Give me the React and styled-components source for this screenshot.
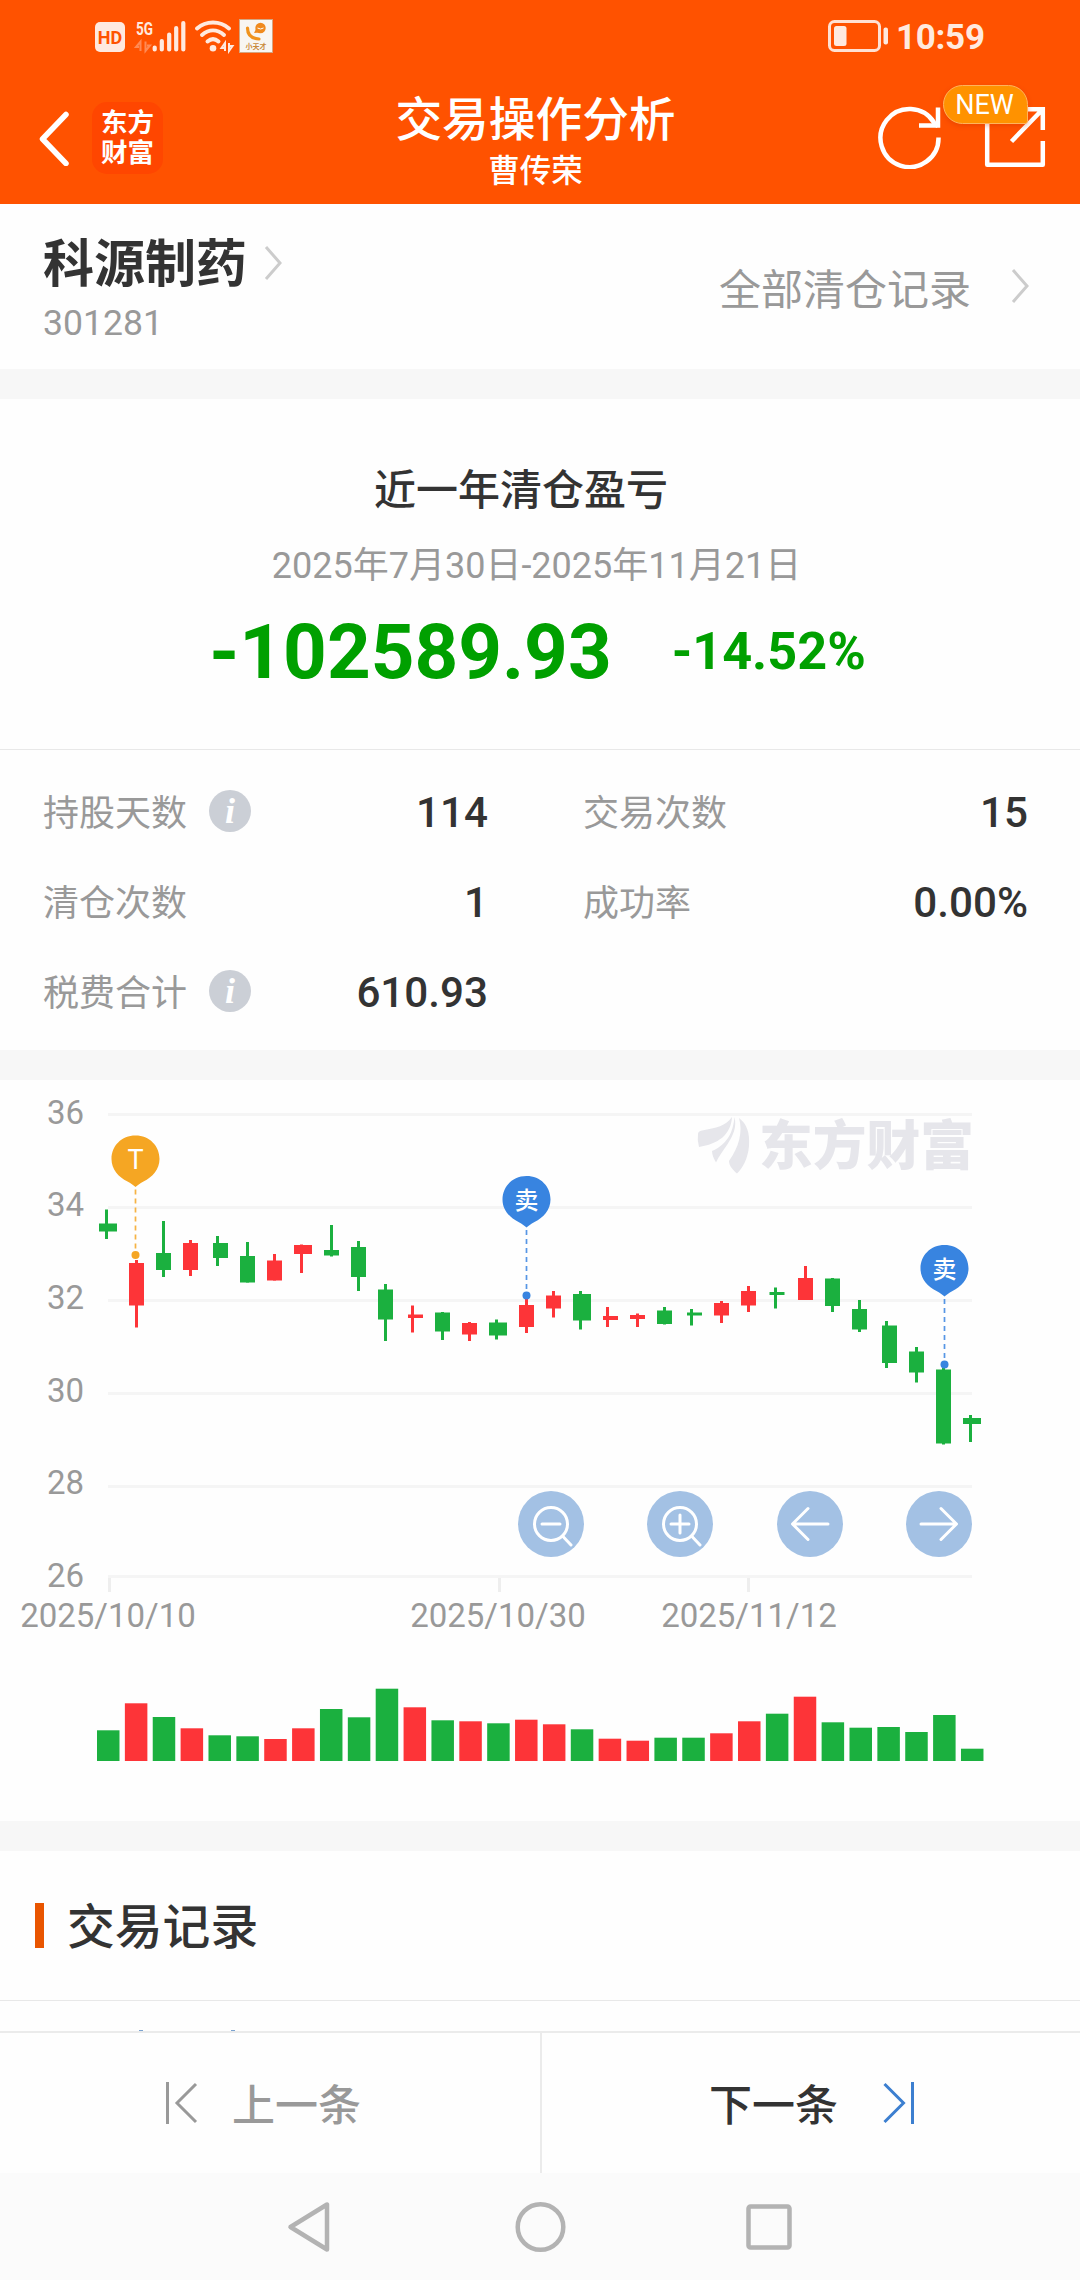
import styled, { createGlobalStyle } from "styled-components";

const GlobalStyle = createGlobalStyle`
  * {
    box-sizing: border-box;
  }

  body {
    margin: 0;
    background: #fefefe;
    color: #333;
    font-family: Roboto, "Noto Sans CJK SC", sans-serif;
  }
`;

const UP = "#fd3438";
const DOWN = "#1bb03f";
const BLUE = "#3884e0";
const AMBER = "#f5a623";

const Screen = styled.div`
  width: 1080px;
  height: 2280px;
  display: flex;
  flex-direction: column;
  overflow: hidden;
  background: #fefefe;
`;

// Header
const Header = styled.header`
  height: 204px;
  flex: none;
  background: #ff5200;
  color: #fff;
`;

const StatusBar = styled.div`
  height: 72px;
  padding: 0 96px 0 95px;
  display: flex;
  justify-content: space-between;
  align-items: center;
`;

const StatusGroup = styled.div`
  display: flex;
  align-items: center;
`;

const Clock = styled.span`
  width: 88px;
  margin: 3px 0 0 8px;
  font-size: 35px;
  line-height: 40px;
  font-weight: 700;
  letter-spacing: -0.3px;
  color: #ffe9df;
`;

const NavBar = styled.div`
  height: 132px;
  padding: 0 34px 0 37px;
  display: grid;
  grid-template-columns: 240px 1fr 240px;
  align-items: center;
`;

const NavLeft = styled.div`
  display: flex;
  align-items: center;
  gap: 20px;
`;

const AppBadge = styled.div`
  width: 71px;
  height: 72px;
  padding: 6px 9px 0;
  border-radius: 15px;
  background: #ff4600;
  font-size: 26.5px;
  line-height: 30px;
  font-weight: 700;
  white-space: pre;
`;

const NavTitle = styled.div`
  padding-right: 12px;
  margin-top: 8px;
  text-align: center;

  h1 {
    margin: 0;
    font-size: 46.7px;
    line-height: 56px;
    font-weight: 500;
  }

  p {
    margin: 3px 0 0;
    font-size: 31.5px;
    line-height: 42px;
    font-weight: 500;
  }
`;

const NavActions = styled.div`
  position: relative;
  margin-top: -2px;
  display: flex;
  justify-content: flex-end;
  align-items: center;
  gap: 43px;
`;

const NewTag = styled.span`
  position: absolute;
  right: 18px;
  top: -20px;
  width: 85px;
  height: 39px;
  padding-right: 2px;
  border: 1.5px solid #ffb35c;
  border-radius: 20px 20px 3px 20px;
  background: #ff9200;
  box-shadow: 0 2px 5px rgba(190, 40, 0, 0.3);
  font-size: 27px;
  line-height: 39px;
  text-align: center;
`;

// Stock summary
const StockRow = styled.section`
  height: 165px;
  flex: none;
  padding: 0 50px 0 43px;
  display: flex;
  justify-content: space-between;
`;

const StockName = styled.h2`
  margin: 31px 0 0;
  display: flex;
  align-items: center;
  gap: 17px;
  font-size: 51px;
  line-height: 60px;
  font-weight: 700;

  svg {
    margin-top: -4px;
  }
`;

const StockCode = styled.div`
  margin-top: 7px;
  font-size: 35.6px;
  line-height: 42px;
  color: #999;
`;

const RecordsLink = styled.div`
  height: 60px;
  margin-top: 52px;
  display: flex;
  align-items: center;
  gap: 40px;
  font-size: 42px;
  color: #999;
`;

const Divider = styled.div`
  height: 30px;
  flex: none;
  background: #f7f7f7;
`;

const Profit = styled.section`
  height: 351px;
  flex: none;
  border-bottom: 1px solid #e8e8e8;
  display: flex;
  flex-direction: column;
  align-items: center;
`;

const ProfitTitle = styled.h3`
  margin: 62px 38px 0 0;
  font-size: 42px;
  line-height: 60px;
  font-weight: 500;
`;

const ProfitRange = styled.div`
  margin: 25px 7px 0 0;
  font-size: 36px;
  line-height: 40px;
  color: #999;
`;

const ProfitFigures = styled.div`
  margin-top: 22px;
  display: flex;
  align-items: center;
  gap: 60px;
  padding-right: 5px;
  color: #00a000;
  font-weight: 700;
  line-height: 88px;
`;

const Amount = styled.span`
  font-size: 76.3px;
`;

const Percent = styled.span`
  font-size: 52.2px;
`;

const Stats = styled.section`
  height: 300px;
  flex: none;
  padding: 16px 53px 0 43px;
  display: grid;
  grid-template-columns: 445px 445px;
  grid-auto-rows: 90px;
  column-gap: 95px;
`;

const Stat = styled.div`
  display: flex;
  align-items: center;
`;

const StatLabel = styled.span`
  margin-top: -2px;
  font-size: 36px;
  color: #999;
`;

const InfoDot = styled.i`
  width: 42px;
  height: 42px;
  margin-left: 22px;
  border-radius: 50%;
  background: #cbcfd6;
  color: #fff;
  font: italic 700 36px/42px "Liberation Serif", serif;
  text-align: center;
`;

const StatValue = styled.span`
  margin: 2px 0 0 auto;
  font-size: 42.2px;
  font-weight: 500;
`;

// Chart
const ChartPanel = styled.section`
  position: relative;
  height: 741px;
  flex: none;

  > svg {
    display: block;
  }
`;

const ChartTools = styled.div`
  position: absolute;
  left: 518px;
  top: 411px;
  width: 454px;
  display: flex;
  justify-content: space-between;
`;

const ToolButton = styled.button`
  width: 66px;
  height: 66px;
  padding: 0;
  border: 0;
  border-radius: 50%;
  background: #a3c1e4;

  svg {
    display: block;
  }
`;

// Trade records and footer
const RecordsHead = styled.section`
  height: 150px;
  flex: none;
  padding-left: 35px;
  border-bottom: 1px solid #e8e8e8;
  display: flex;
  align-items: center;

  &::before {
    content: "";
    width: 9px;
    height: 45px;
    background: #e95500;
  }

  h3 {
    margin: 5px 0 0 23px;
    font-size: 47.8px;
    line-height: 60px;
    font-weight: 500;
  }
`;

const RecordsPeek = styled.div`
  height: 30px;
  flex: none;

  svg {
    display: block;
  }
`;

const Pager = styled.nav`
  height: 142px;
  flex: none;
  display: grid;
  grid-template-columns: 1fr 1fr;
  border-top: 2px solid #ebebeb;
`;

const PagerItem = styled.div`
  display: flex;
  align-items: center;
  gap: ${(props) => (props.$next ? "45px" : "34px")};
  padding-left: ${(props) => (props.$next ? "167px" : "166px")};
  border-left: ${(props) => (props.$next ? "2px solid #ebebeb" : "none")};
  color: ${(props) => (props.$next ? "#333" : "#999")};
  font-size: 43px;
  font-weight: 500;

  span {
    margin-top: -2px;
  }
`;

const SystemNav = styled.div`
  flex: 1;
  padding: 0 284px 0 285px;
  display: flex;
  justify-content: space-between;
  background: #fbfbfb;

  svg {
    margin-top: 27px;
  }
`;

const Arrow = () => (
  <svg width="19" height="36" viewBox="0 0 19 36" fill="none" stroke="#ccc" strokeWidth="3">
    <path d="M2 2 16 18 2 34" />
  </svg>
);

const stats = [
  { label: "持股天数", value: "114", info: true },
  { label: "交易次数", value: "15" },
  { label: "清仓次数", value: "1" },
  { label: "成功率", value: "0.00%" },
  { label: "税费合计", value: "610.93", info: true },
];

// [x, high, body top, body bottom, low, rising, volume height, body left, body width]
const candles = [
  [106.5, 129.5, 143.5, 151.5, 159, 0, 30.7, 99, 18],
  [136.5, 180, 183, 225.5, 247.5, 1, 57.7, 129, 15],
  [163.5, 141, 173, 190, 197, 0, 44, 156, 15],
  [190.5, 160, 163, 190, 196, 1, 32.7, 183, 15],
  [217.5, 156, 163, 178, 186, 0, 25.7, 213, 15],
  [247.5, 162, 176, 202.5, 202.5, 0, 24.7, 240, 15],
  [274.5, 174, 180.5, 200.5, 200.5, 1, 22, 267, 15],
  [301.5, 164.5, 165, 174, 193, 1, 32.7, 294, 18],
  [331.5, 145, 170, 175.5, 176.5, 0, 52, 324, 15],
  [358.5, 161, 167, 197, 211, 0, 43.7, 351, 15],
  [385.5, 204, 209.5, 239.5, 261, 0, 72.3, 378, 15],
  [412.5, 225.5, 234.5, 238, 252.5, 1, 53.7, 408, 15],
  [442.5, 232, 232.5, 251.5, 260, 0, 40.7, 435, 15],
  [469.5, 242, 243, 254.5, 261, 1, 39.7, 462, 15],
  [496.5, 239.5, 242.5, 255.5, 259.5, 0, 37.7, 489, 18],
  [526.5, 219, 225, 247, 253, 1, 41.3, 519, 15],
  [553.5, 211, 215.5, 228.5, 237.5, 1, 36.7, 546, 15],
  [580.5, 211, 214, 240.5, 249.5, 0, 31.7, 573, 18],
  [607.5, 227, 236, 240, 247, 1, 22.3, 603, 15],
  [637.5, 233.5, 235, 239, 247, 1, 20.3, 630, 15],
  [664.5, 227, 230.5, 244, 244.5, 0, 23.3, 657, 15],
  [691.5, 229, 232.5, 235.5, 245.5, 0, 23.3, 687, 15],
  [721.5, 221, 223, 235.5, 243, 1, 27.7, 714, 15],
  [748.5, 206, 211, 225.5, 232, 1, 39.7, 741, 15],
  [775.5, 207.5, 212, 215, 228.5, 0, 47.3, 769.5, 15],
  [805.5, 186, 198, 220, 220, 1, 64.3, 798, 15],
  [832.5, 198, 198.5, 226, 232, 0, 38.7, 825, 15],
  [859.5, 220, 229, 249.5, 252, 0, 33.3, 852, 15],
  [886.5, 241, 245.5, 283, 288, 0, 34, 882, 15],
  [916.5, 267, 271.5, 292.5, 302.5, 0, 29, 909, 15],
  [943.5, 288, 289.5, 363.5, 364.5, 0, 46, 936, 15],
  [970.5, 335, 338, 344, 362, 0, 12.3, 963, 18],
];

// [price, line y, label baseline]
const gridLines = [
  [36, 34.5, 44],
  [34, 127.5, 136],
  [32, 220.5, 229],
  [30, 313.5, 322],
  [28, 406.5, 414],
  [26, 496.5, 507],
];

const dates = [
  ["2025/10/10", 109.5, 108],
  ["2025/10/30", 499.5, 498],
  ["2025/11/12", 748.5, 749],
];

const markers = [
  { label: "T", x: 135.5, top: 55.5, color: AMBER },
  { label: "卖", x: 526.5, top: 96, color: BLUE },
  { label: "卖", x: 944.5, top: 165, color: BLUE },
];

function Marker({ label, x, top, color }) {
  return (
    <g transform={`translate(${x} ${top})`}>
      <line x1="0" x2="0" y1="54" y2="118" stroke={color} strokeWidth="1.7" strokeDasharray="5 4" strokeOpacity="0.85" />
      <circle cx="0" cy="119.5" r="4" fill={color} />
      <path d="M0 0C14 0 24 10.500 24 23.500C24 34 17 41.500 8 46C4 48 2 50 0 51.500C-2 50-4 48-8 46C-17 41.500-24 34-24 23.500C-24 10.500-14 0 0 0Z" fill={color} />
      <text
        y={label === "T" ? 33.5 : 32.5}
        fill="#fff"
        fontSize={label === "T" ? 27 : 24}
        fontWeight={label === "T" ? 400 : 500}
        textAnchor="middle"
      >
        {label}
      </text>
    </g>
  );
}

function Chart() {
  return (
    <svg width="1080" height="741" viewBox="0 0 1080 741">
      {gridLines.map(([price, y, baseline]) => (
        <g key={price}>
          <rect x="108" y={y - 1.5} width="864" height="3" fill="#f5f5f5" />
          <text x="84" y={baseline} fill="#999" fontSize="33" textAnchor="end">
            {price}
          </text>
        </g>
      ))}
      {dates.map(([date, x, center]) => (
        <g key={date}>
          <rect x={x - 1.5} y="498" width="3" height="14" fill="#eee" />
          <text x={center} y="547" fill="#999" fontSize="33" textAnchor="middle">
            {date}
          </text>
        </g>
      ))}

      {/* Watermark */}
      <g fill="#e6e6eb">
        <path d="M698 54Q698 51 702 50.500C716 48 726 46 732 37C731 55 718 64 699 67Q697 60 698 54Z" />
        <path d="M734.500 37C737 47 733 56 727 65C723 71 719 76 716 82.500C714 79 712 75 712 71C728 64 733 52 734.500 37Z" />
        <path d="M739 38C747 44 750 53 749 66C748 78 743 88 737 93.500C733 90 729 86 729 81C739 67 743 52 739 38Z" />
        <text x="759" y="84.5" fontSize="53" fontWeight="900" textLength="215" lengthAdjust="spacingAndGlyphs">
          东方财富
        </text>
      </g>

      {candles.map(([x, high, top, bottom, low, rising, , left, width]) => (
        <g key={x} fill={rising ? UP : DOWN}>
          <rect x={x - 1.5} y={high} width="3" height={low - high} />
          <rect x={left} y={top} width={width} height={bottom - top} />
        </g>
      ))}

      {/* Volume */}
      {candles.map(([x, , , , , rising, volume], i) => (
        <rect key={x} x={97 + i * 27.87} y={681 - volume} width="22.5" height={volume} fill={rising ? UP : DOWN} />
      ))}

      {markers.map((m) => (
        <Marker key={m.x} {...m} />
      ))}
    </svg>
  );
}

const tools = [
  { name: "zoom-out", d: "M24 33h18M44.500 45 53 54" },
  { name: "zoom-in", d: "M24 33h18M33 24v18M44.500 45 53 54" },
  { name: "prev", d: "M51 33H16M31 17.500 15.500 33 31 48.500" },
  { name: "next", d: "M15 33H50M35 17.500 50.500 33 35 48.500" },
];

export default function App() {
  return (
    <Screen>
      <GlobalStyle />
      <Header>
        <StatusBar>
          <StatusGroup>
            <svg width="180" height="36" viewBox="95 18 180 36">
              <rect x="95" y="22" width="30" height="30" rx="5" fill="#ffe9df" />
              <text x="110" y="43.500" fill="#ff5200" fontSize="18" fontWeight="700" textAnchor="middle">
                HD
              </text>
              <text x="136" y="34.500" fill="#ffe9df" fontSize="18" fontWeight="700" textLength="17" lengthAdjust="spacingAndGlyphs">
                5G
              </text>
              <path d="M140.500 51V41.500L136 47h3M145.500 41.500V51L150 45.500h-3" fill="none" stroke="#ff8a55" strokeWidth="2" />
              <path
                d="M154.700 47.500V49.500M161.800 41V49.500M169.200 34.500V49.500M176.200 28V49.500M183.300 23V49.500"
                stroke="#ffe9df"
                strokeWidth="4.200"
                strokeLinecap="round"
              />
              <g fill="none" stroke="#ffe9df" strokeWidth="4" strokeLinecap="round">
                <path d="M197 28.500C206 20.500 220 20.500 229 28.500M202 35C209 29 217 29 224 35M207.500 41.500C211 38.500 215 38.500 218.500 41.500" />
              </g>
              <circle cx="213" cy="48.300" r="3.300" fill="#ffe9df" />
              <path d="M225 51V43L221.500 48h3M229 43V51L232.500 46h-3" fill="none" stroke="#ffe9df" strokeWidth="2" />
              <rect x="239.500" y="19.500" width="33" height="33" fill="#f8f6f2" stroke="#d5a580" />
              <circle cx="260.500" cy="28" r="5.200" fill="#f08a1d" />
              <path d="M256 29 254 33 260 32.500Z" fill="#f08a1d" />
              <path d="M247.500 28C247.500 34 251 38.500 259 39" fill="none" stroke="#f0931d" strokeWidth="3.200" strokeLinecap="round" />
              <path d="M257.500 28q3 2 6 0" fill="none" stroke="#fff" />
              <text x="256" y="48.500" fill="#c98a3a" fontSize="7" fontWeight="700" textAnchor="middle">
                小天才
              </text>
            </svg>
          </StatusGroup>
          <StatusGroup>
            <svg width="61" height="34" viewBox="825 19.500 61 34" fill="#ffe9df">
              <rect x="827.500" y="22" width="50" height="29" rx="5" fill="none" stroke="#ffe0d2" strokeWidth="3" />
              <rect x="832" y="26.500" width="12.500" height="20" rx="2.500" />
              <rect x="881.500" y="28" width="4.500" height="17" rx="2" />
            </svg>
            <Clock>10:59</Clock>
          </StatusGroup>
        </StatusBar>

        <NavBar>
          <NavLeft>
            <svg width="35" height="56" viewBox="0 0 35 56" fill="none" stroke="#fff" strokeWidth="5.500" strokeLinecap="round" strokeLinejoin="round">
              <path d="M29 4.500 5.500 29 29 53.500" />
            </svg>
            <AppBadge>{"东方\n财富"}</AppBadge>
          </NavLeft>
          <NavTitle>
            <h1>交易操作分析</h1>
            <p>曹传荣</p>
          </NavTitle>
          <NavActions>
            <svg width="64" height="64" viewBox="876 106 64 64" fill="none" stroke="#fff" strokeWidth="4.500">
              <path d="M937.500 138.500A29 29 0 1 1 933 123.500L937 127.500" />
              <path d="M937 108.500V126.500H918" />
            </svg>
            <svg width="62" height="64" viewBox="984 106 62 64" fill="none" stroke="#fff" strokeWidth="4.500" strokeLinejoin="round">
              <path d="M987.200 110.200V165.800H1042.800V142" />
              <path d="M1020 110.200H1042.800V131M1042 111 1011.500 142.500" strokeLinejoin="miter" />
            </svg>
            <NewTag>NEW</NewTag>
          </NavActions>
        </NavBar>
      </Header>

      <StockRow>
        <div>
          <StockName>
            科源制药
            <Arrow />
          </StockName>
          <StockCode>301281</StockCode>
        </div>
        <RecordsLink>
          全部清仓记录
          <Arrow />
        </RecordsLink>
      </StockRow>
      <Divider />

      <Profit>
        <ProfitTitle>近一年清仓盈亏</ProfitTitle>
        <ProfitRange>2025年7月30日-2025年11月21日</ProfitRange>
        <ProfitFigures>
          <Amount>-102589.93</Amount>
          <Percent>-14.52%</Percent>
        </ProfitFigures>
      </Profit>
      <Stats>
        {stats.map((item) => (
          <Stat key={item.label}>
            <StatLabel>{item.label}</StatLabel>
            {item.info && <InfoDot>i</InfoDot>}
            <StatValue>{item.value}</StatValue>
          </Stat>
        ))}
      </Stats>
      <Divider />

      <ChartPanel>
        <Chart />
        <ChartTools>
          {tools.map((tool) => (
            <ToolButton key={tool.name} aria-label={tool.name}>
              <svg width="66" height="66" fill="none" stroke="#fff" strokeWidth="3">
                {tool.name.startsWith("zoom") && <circle cx="33" cy="33" r="16.500" />}
                <path d={tool.d} strokeLinecap="round" strokeLinejoin="round" />
              </svg>
            </ToolButton>
          ))}
        </ChartTools>
      </ChartPanel>
      <Divider />

      <RecordsHead>
        <h3>交易记录</h3>
      </RecordsHead>
      <RecordsPeek>
        {/* First row is cut off by the pager */}
        <svg width="1080" height="30" fill="#7ba3d0">
          <path d="M139 29h4v1h-4zM231 29h4v1h-4z" />
        </svg>
      </RecordsPeek>

      <Pager>
        <PagerItem>
          <svg width="32" height="44" viewBox="0 0 32 44" fill="none" stroke="#999" strokeWidth="3">
            <path d="M1.500 1V43M30 3 11 22 30 41" />
          </svg>
          <span>上一条</span>
        </PagerItem>
        <PagerItem $next>
          <span>下一条</span>
          <svg width="32" height="44" viewBox="0 0 32 44" fill="none" stroke="#3c7fd0" strokeWidth="3">
            <path d="M29.500 1V43M1.500 3 20.500 22 1.500 41" />
          </svg>
        </PagerItem>
      </Pager>
      <SystemNav>
        <svg width="50" height="54" fill="none" stroke="#b3b3b3" strokeWidth="4.500" strokeLinejoin="round">
          <path d="M42 4.500V49.500L5.500 27Z" />
        </svg>
        <svg width="54" height="54" fill="none" stroke="#b3b3b3" strokeWidth="4.500">
          <circle cx="28.500" cy="27" r="22.800" />
        </svg>
        <svg width="54" height="54" fill="none" stroke="#b3b3b3" strokeWidth="4.500">
          <rect x="6.500" y="6.500" width="41" height="41" rx="2" />
        </svg>
      </SystemNav>
    </Screen>
  );
}
